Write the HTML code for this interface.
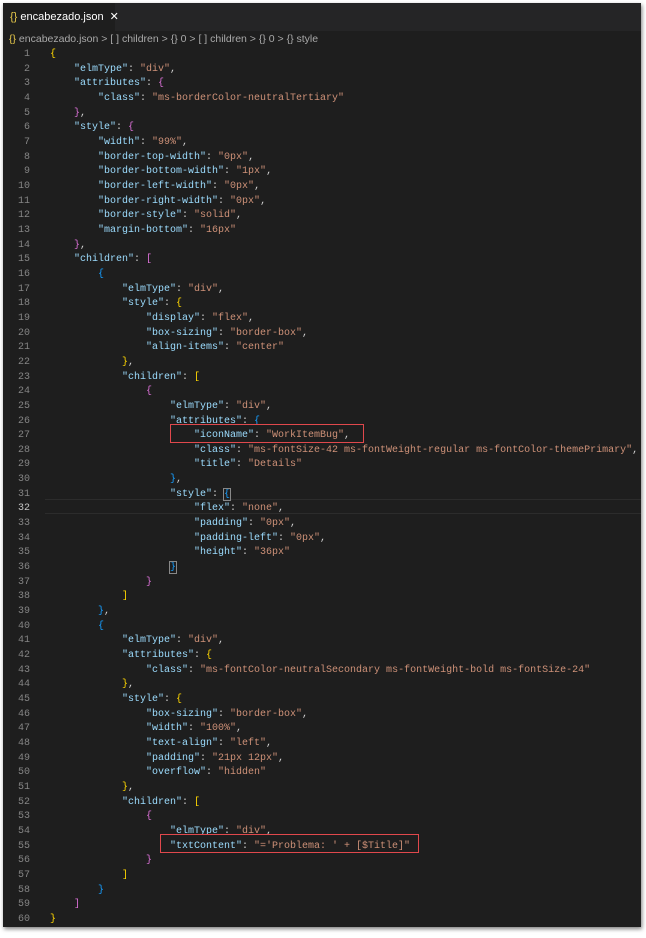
<!DOCTYPE html>
<html><head><meta charset="utf-8"><style>
html,body{margin:0;padding:0;background:#fff;}
#ed{position:absolute;left:3px;top:3px;width:638px;height:924px;background:#1e1e1e;box-shadow:1px 2px 4px rgba(0,0,0,.5);overflow:hidden;font-family:"Liberation Mono",monospace;font-size:10px;}
#tabbar{position:absolute;left:0;top:0;width:638px;height:28px;background:#252526;}
#tab{position:absolute;left:0;top:0;width:112px;height:28px;background:#1e1e1e;color:#fff;font-family:"Liberation Sans",sans-serif;font-size:11px;line-height:28px;white-space:nowrap;}
#crumb{position:absolute;left:6px;top:28px;height:16px;line-height:16px;color:#a9a9a9;font-family:"Liberation Sans",sans-serif;font-size:10.5px;white-space:pre;}
.l{position:absolute;left:0;height:14.66px;line-height:14.66px;white-space:pre;width:638px;}
.n{position:absolute;left:0;top:0;width:27px;text-align:right;color:#858585;}
.c{position:absolute;top:0;}
.k{color:#9cdcfe}.s{color:#ce9178}.p{color:#d4d4d4}
.y{color:#ffd700}.m{color:#da70d6}.b{color:#179fff}
.box{position:absolute;border:1.5px solid #e0484c;}
.hl{position:absolute;left:42px;width:596px;height:13px;border-top:1px solid #2c2c2c;border-bottom:1px solid #2c2c2c;}
</style></head><body>
<div id="ed">
<div id="tabbar"></div>
<div id="tab"><span style="color:#e6c84a;margin-left:7px">{}</span> encabezado.json <span style="margin-left:3px">✕</span></div>
<div id="crumb"><span style="color:#e6c84a">{}</span> encabezado.json &gt; [ ] children &gt; {} 0 &gt; [ ] children &gt; {} 0 &gt; {} style</div>
<div class="hl" style="top:496px"></div>
<div id="code"></div>
<div class="box" style="left:167px;top:421px;width:192px;height:17px"></div>
<div class="box" style="left:157px;top:831px;width:257px;height:17px"></div>
</div>
<script>
(function(){
var L=[
[0,'<span class="y">{</span>'],
[1,'KV"elmType"|"div",'],
[1,'<span class="k">"attributes"</span><span class="p">: </span><span class="m">{</span>'],
[2,'KV"class"|"ms-borderColor-neutralTertiary"'],
[1,'<span class="m">}</span><span class="p">,</span>'],
[1,'<span class="k">"style"</span><span class="p">: </span><span class="m">{</span>'],
[2,'KV"width"|"99%",'],
[2,'KV"border-top-width"|"0px",'],
[2,'KV"border-bottom-width"|"1px",'],
[2,'KV"border-left-width"|"0px",'],
[2,'KV"border-right-width"|"0px",'],
[2,'KV"border-style"|"solid",'],
[2,'KV"margin-bottom"|"16px"'],
[1,'<span class="m">}</span><span class="p">,</span>'],
[1,'<span class="k">"children"</span><span class="p">: </span><span class="m">[</span>'],
[2,'<span class="b">{</span>'],
[3,'KV"elmType"|"div",'],
[3,'<span class="k">"style"</span><span class="p">: </span><span class="y">{</span>'],
[4,'KV"display"|"flex",'],
[4,'KV"box-sizing"|"border-box",'],
[4,'KV"align-items"|"center"'],
[3,'<span class="y">}</span><span class="p">,</span>'],
[3,'<span class="k">"children"</span><span class="p">: </span><span class="y">[</span>'],
[4,'<span class="m">{</span>'],
[5,'KV"elmType"|"div",'],
[5,'<span class="k">"attributes"</span><span class="p">: </span><span class="b">{</span>'],
[6,'KV"iconName"|"WorkItemBug",'],
[6,'KV"class"|"ms-fontSize-42 ms-fontWeight-regular ms-fontColor-themePrimary",'],
[6,'KV"title"|"Details"'],
[5,'<span class="b">}</span><span class="p">,</span>'],
[5,'<span class="k">"style"</span><span class="p">: </span><span class="b" style="outline:1px solid #888">{</span>'],
[6,'KV"flex"|"none",'],
[6,'KV"padding"|"0px",'],
[6,'KV"padding-left"|"0px",'],
[6,'KV"height"|"36px"'],
[5,'<span class="b" style="outline:1px solid #888">}</span>'],
[4,'<span class="m">}</span>'],
[3,'<span class="y">]</span>'],
[2,'<span class="b">}</span><span class="p">,</span>'],
[2,'<span class="b">{</span>'],
[3,'KV"elmType"|"div",'],
[3,'<span class="k">"attributes"</span><span class="p">: </span><span class="y">{</span>'],
[4,'KV"class"|"ms-fontColor-neutralSecondary ms-fontWeight-bold ms-fontSize-24"'],
[3,'<span class="y">}</span><span class="p">,</span>'],
[3,'<span class="k">"style"</span><span class="p">: </span><span class="y">{</span>'],
[4,'KV"box-sizing"|"border-box",'],
[4,'KV"width"|"100%",'],
[4,'KV"text-align"|"left",'],
[4,'KV"padding"|"21px 12px",'],
[4,'KV"overflow"|"hidden"'],
[3,'<span class="y">}</span><span class="p">,</span>'],
[3,'<span class="k">"children"</span><span class="p">: </span><span class="y">[</span>'],
[4,'<span class="m">{</span>'],
[5,'KV"elmType"|"div",'],
[5,'KV"txtContent"|"=\'Problema: \' + [$Title]"'],
[4,'<span class="m">}</span>'],
[3,'<span class="y">]</span>'],
[2,'<span class="b">}</span>'],
[1,'<span class="m">]</span>'],
[0,'<span class="y">}</span>']
];
var h='';
function esc(s){return s.replace(/&/g,'&amp;').replace(/</g,'&lt;');}
for(var i=0;i<L.length;i++){
 var lv=L[i][0],t=L[i][1];
 if(t.indexOf('KV')==0){var p=t.slice(2).split('|');var v=p[1],comma='';if(v.slice(-1)==','){comma=',';v=v.slice(0,-1);}
  t='<span class="k">'+esc(p[0])+'</span><span class="p">: </span><span class="s">'+esc(v)+'</span><span class="p">'+comma+'</span>';}
 var yy=(45+i*14.66).toFixed(2);
 h+='<div class="l" style="top:'+yy+'px"><span class="n"'+(i==31?' style="color:#c6c6c6"':'')+'>'+(i+1)+'</span><span class="c" style="left:'+(47+24*lv)+'px">'+t+'</span></div>';
}
document.getElementById('code').innerHTML=h;
})();
</script>
</body></html>
